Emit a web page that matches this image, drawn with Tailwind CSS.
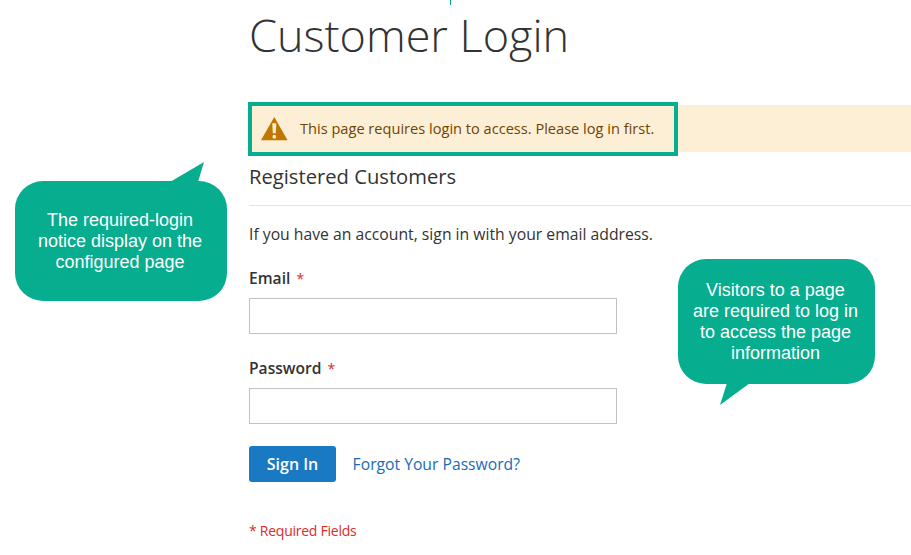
<!DOCTYPE html>
<html lang="en">
<head>
    <meta charset="UTF-8">
    <meta name="viewport" content="width=device-width, initial-scale=1.0">
    <title>Customer Login</title>
    <script src="https://cdn.jsdelivr.net/npm/@tailwindcss/browser@4"></script>
</head>
<body class="relative h-[555px] overflow-hidden bg-white font-['Open_Sans',sans-serif] text-[#333]">
    <div class="absolute left-[450px] top-0 h-[5px] w-px bg-[#06ad8e]"></div>

    <!-- Login page -->
    <main class="ml-[249px]">
        <h1 class="h-[105px] pt-[7px] text-[45px] leading-[56px] font-light">Customer Login</h1>

        <div class="relative flex h-[47px] items-center bg-[#fdefd5] text-[#6f4400]">
            <div class="absolute -left-px -top-[3px] h-[54px] w-[430px] border-4 border-[#06ad8e]"></div>
            <svg class="ml-3 h-6 w-[27px]" viewBox="0 0 27 24">
                <path d="M13.3 0 26.6 23.2H0z" fill="#c07600"/>
                <path d="M11.3 6.3h4l-.5 10h-3z" fill="#fdefd5"/>
                <rect x="11.6" y="18" width="3.4" height="3.4" rx="1" fill="#fdefd5"/>
            </svg>
            <p class="ml-3 text-[14.6px]">This page requires login to access. Please log in first.</p>
        </div>

        <h2 class="h-[54px] border-b border-[#e4e4e4] pt-[10px] text-[20.2px] leading-[28px]">Registered Customers</h2>
        <p class="mt-[16px] text-[15.74px] leading-6">If you have an account, sign in with your email address.</p>

        <form>
            <label class="mt-[20px] block h-6 text-[15.6px] leading-6 font-semibold">Email <span class="ml-0.5 text-[14px] font-normal text-[#e02b27]">*</span></label>
            <input type="text" class="mt-2 block h-9 w-[368px] border border-[#c2c2c2]">
            <label class="mt-[22px] block h-6 text-[15.6px] leading-6 font-semibold">Password <span class="ml-0.5 text-[14px] font-normal text-[#e02b27]">*</span></label>
            <input type="password" class="mt-2 block h-9 w-[368px] border border-[#c2c2c2]">
            <div class="mt-[22px] flex items-center">
                <button type="button" class="h-9 w-[87px] rounded-[3px] bg-[#1979c3] text-[16px] font-semibold text-white">Sign In</button>
                <a href="#" class="ml-[16.6px] pt-px text-[15.7px] text-[#1a6bb3]">Forgot Your Password?</a>
            </div>
        </form>
        <p class="mt-[39px] text-[14px] leading-5 tracking-[-0.25px] text-[#e02b27]">* Required Fields</p>
    </main>

    <!-- Callouts -->
    <div class="absolute left-[15px] top-[181px] flex h-[120px] w-[212px] items-center justify-center rounded-[28px] bg-[#06ad8e] pr-0.5 text-center font-['Liberation_Sans',sans-serif] text-[18px] leading-[21px] text-white">
        <svg class="absolute left-[155px] -top-[19px] h-5 w-[34px]" viewBox="0 0 34 20"><path d="M0 20 34 0 28 20z" fill="#06ad8e"/></svg>
        <p>The required-login<br>notice display on the<br>configured page</p>
    </div>
    <div class="absolute left-[678px] top-[259px] flex h-[125px] w-[197px] items-center justify-center rounded-[28px] bg-[#06ad8e] pr-0.5 text-center font-['Liberation_Sans',sans-serif] text-[18px] leading-[21px] text-white">
        <svg class="absolute left-[42px] top-[124px] h-[22px] w-[30px]" viewBox="0 0 30 22"><path d="M7 0H30L0 22z" fill="#06ad8e"/></svg>
        <p>Visitors to a page<br>are required to log in<br>to access the page<br>information</p>
    </div>
</body>
</html>
